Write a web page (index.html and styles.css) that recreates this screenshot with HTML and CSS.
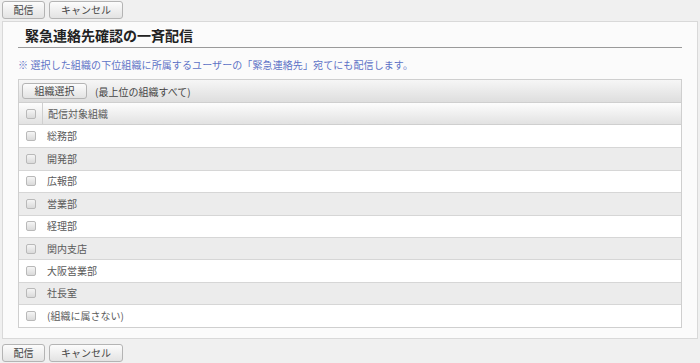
FILE: index.html
```html
<!DOCTYPE html>
<html lang="ja">
<head>
  <meta charset="UTF-8">
  <title>緊急連絡先確認の一斉配信</title>
  <link rel="stylesheet" href="styles.css">
</head>
<body>

  <!-- top actions -->
  <div class="actions">
    <button class="btn btn-send">配信</button>
    <button class="btn btn-cancel">キャンセル</button>
  </div>

  <div class="panel">
    <h2 class="panel-title">緊急連絡先確認の一斉配信</h2>
    <p class="note">※ 選択した組織の下位組織に所属するユーザーの「緊急連絡先」宛てにも配信します。</p>

    <div class="org-table">
      <div class="toolbar">
        <button class="btn btn-small">組織選択</button>
        <span class="scope">(最上位の組織すべて)</span>
      </div>
      <div class="row head">
        <div class="cell-check"><input type="checkbox" class="cb"></div>
        <div class="cell-name">配信対象組織</div>
      </div>
      <div class="row"><div class="cell-check"><input type="checkbox" class="cb"></div><div class="cell-name">総務部</div></div>
      <div class="row alt"><div class="cell-check"><input type="checkbox" class="cb"></div><div class="cell-name">開発部</div></div>
      <div class="row"><div class="cell-check"><input type="checkbox" class="cb"></div><div class="cell-name">広報部</div></div>
      <div class="row alt"><div class="cell-check"><input type="checkbox" class="cb"></div><div class="cell-name">営業部</div></div>
      <div class="row"><div class="cell-check"><input type="checkbox" class="cb"></div><div class="cell-name">経理部</div></div>
      <div class="row alt"><div class="cell-check"><input type="checkbox" class="cb"></div><div class="cell-name">関内支店</div></div>
      <div class="row"><div class="cell-check"><input type="checkbox" class="cb"></div><div class="cell-name">大阪営業部</div></div>
      <div class="row alt"><div class="cell-check"><input type="checkbox" class="cb"></div><div class="cell-name">社長室</div></div>
      <div class="row"><div class="cell-check"><input type="checkbox" class="cb"></div><div class="cell-name">(組織に属さない)</div></div>
    </div>
  </div>

  <!-- bottom actions -->
  <div class="actions bottom">
    <button class="btn btn-send">配信</button>
    <button class="btn btn-cancel">キャンセル</button>
  </div>

</body>
</html>
```

FILE: styles.css
```css
/* Page */
body {
  margin: 0;
  background-color: #f0f0f0;
  font-family: "Noto Sans CJK JP", "Noto Sans", sans-serif;
  font-size: 10px;
  color: #5a5a5a;
}

/* Button rows */
.actions {
  display: flex;
  gap: 4px;
  padding: 1px 2px 0;
}

.actions.bottom {
  padding-top: 5px;
}

.btn {
  height: 18px;
  box-sizing: border-box;
  padding: 0;
  border: 1px solid #b4b4b4;
  border-radius: 3px;
  background: linear-gradient(#fcfcfc, #e3e3e3);
  font-family: inherit;
  font-size: 10px;
  line-height: 16px;
  color: #444;
  text-align: center;
}

.btn-send {
  width: 43px;
}

.btn-cancel {
  width: 74px;
}

.btn-small {
  width: 65px;
  height: 16px;
  line-height: 14px;
}

/* Panel */
.panel {
  margin: 2px 2px 0;
  padding: 0 15px 10px;
  border: 1px solid #d9d9d9;
  background-color: #fbfbfb;
}

.panel-title {
  margin: 0;
  padding: 3px 0 2px 7px;
  font-size: 14px;
  line-height: 20px;
  font-weight: bold;
  color: #222;
  border-bottom: 1px solid #9a9a9a;
}

.note {
  margin: 10px 0 7px;
  line-height: 14px;
  color: #5d72c6;
  letter-spacing: 0.1px;
}

/* Organisation table */
.org-table {
  border: 1px solid #cfcfcf;
  background-color: #fff;
}

.toolbar {
  display: flex;
  align-items: center;
  gap: 8px;
  height: 22px;
  padding-left: 3px;
  border-bottom: 1px solid #cfcfcf;
  background: linear-gradient(#f6f6f6, #dedede);
}

.scope {
  color: #444;
}

.row {
  display: flex;
  align-items: center;
  height: 22.4px;
  box-sizing: border-box;
  border-top: 1px solid #d6d6d6;
}

.row.head {
  height: 22px;
  border-top: none;
  border-bottom: 1px solid #cfcfcf;
  background: linear-gradient(#fdfdfd, #e2e2e2);
}

.row.head + .row {
  border-top: none;
}

.row.alt {
  background-color: #ececec;
}

.cell-check {
  width: 24px;
  height: 100%;
  display: flex;
  align-items: center;
  justify-content: center;
  box-sizing: border-box;
}

.row.head .cell-check {
  border-right: 1px solid #cfcfcf;
}

.cell-name {
  padding-left: 4px;
  line-height: 14px;
}

.row.head .cell-name {
  padding-left: 5px;
}

/* Checkbox */
.cb {
  appearance: none;
  -webkit-appearance: none;
  width: 10px;
  height: 10px;
  margin: 0;
  border: 1px solid #b9b9b9;
  border-radius: 2px;
  background: linear-gradient(#f5f5f5, #dadada);
}
```
